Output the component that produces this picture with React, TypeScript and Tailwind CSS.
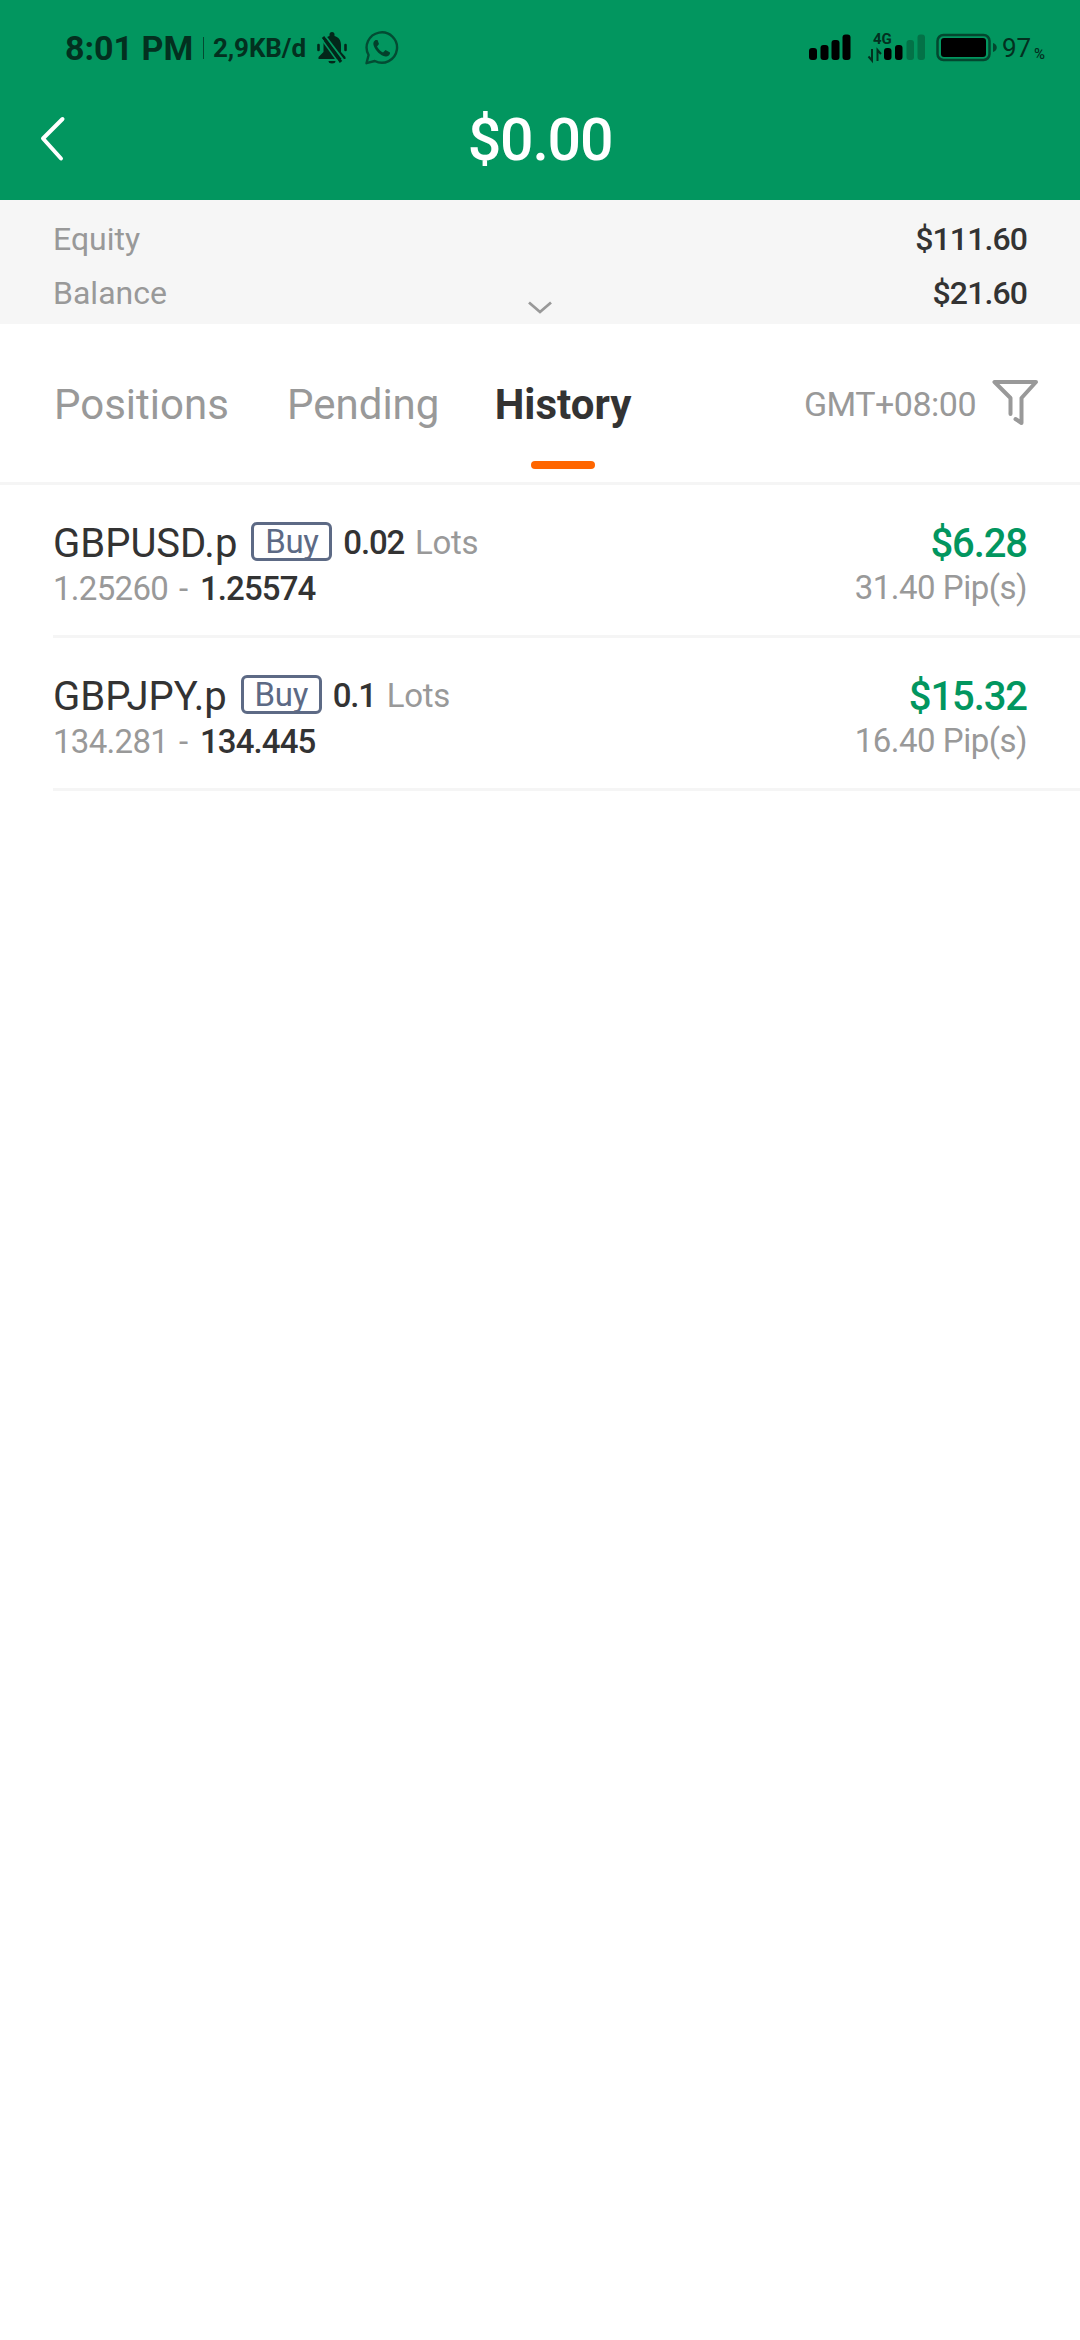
import { type ReactNode } from 'react'

export default function App() {
  return (
    <div className="flex min-h-[2340px] w-[1080px] flex-col bg-white font-[Roboto,sans-serif] text-[#333333]">
      <header className="h-[200px] bg-[#02965f]">
        <StatusBar />
        <div className="grid h-[88px] grid-cols-[100px_1fr_100px] items-center">
          <button aria-label="Back" className="pl-[38px]">
            <svg width="30" height="50" viewBox="0 0 30 50" fill="none">
              <path d="M24.500 4L5 23.500L23 43.500" stroke="white" strokeWidth="4" strokeLinecap="round" strokeLinejoin="round" />
            </svg>
          </button>
          <h1 className="text-center text-[59px] leading-[68px] font-medium tracking-[-1.2px] text-white">$0.00</h1>
        </div>
      </header>

      <Summary />
      <Tabs />

      <main>
        {trades.map((trade) => (
          <TradeRow key={trade.symbol} {...trade} />
        ))}
      </main>
    </div>
  )
}

function StatusBar() {
  return (
    <div className="flex h-24 items-center justify-between pr-[34px] pl-[65px] text-[#03301f]">
      <div className="flex items-center">
        <span className="w-[138px] text-[34px] leading-10 font-bold whitespace-nowrap">8:01 PM</span>
        <span className="h-[22px] w-px bg-[#034a31]" />
        <span className="ml-[9px] w-[103px] text-[26px] leading-8 font-bold tracking-[-0.1px] whitespace-nowrap">2,9KB/d</span>
        <svg className="mr-4" width="32" height="34" viewBox="0 0 32 34" fill="none">
          <path d="M16 1a2.500 2.500 0 0 0-2.500 2.500V5C9.500 6 7.500 9 7.500 14v7L2.500 26v2H29.500v-2L25 21v-7c0-5-2.500-8-6.500-9V3.500A2.500 2.500 0 0 0 16 1Z" fill="#03271a" />
          <path d="M12.500 30h7a3.500 2.500 0 0 1-7 0Z" fill="#03271a" />
          <path d="M7 2L29 31" stroke="#02965f" strokeWidth="2" />
          <path d="M7 6L25 31" stroke="#03271a" strokeWidth="3" />
          <path d="M4 6L22 31" stroke="#02965f" strokeWidth="1.500" />
          <path d="M2.500 14v5M29.500 14v5" stroke="#03271a" strokeWidth="2.600" strokeLinecap="round" />
        </svg>
        <svg width="36" height="36" viewBox="0 0 36 36" fill="none">
          <path d="M2.500 33.200L4.600 25A15.200 15.200 0 1 1 10.800 31L2.500 33.200Z" stroke="#034c33" strokeWidth="2.400" strokeLinejoin="round" />
          <path d="M11.500 10C9.800 11 9 12.800 9.500 15C11.500 21 16.500 25.500 21.500 26.500C24 26.500 26.200 25 26 22.500L21.500 20L19 22.500C16.500 21.500 14.300 19 13 16.500L15 14L13.500 10Z" fill="#03402b" />
        </svg>
      </div>
      <div className="flex items-center">
        <SignalIcons />
        <span className="ml-[3px] w-8 text-[26px] leading-8">97</span>
        <span className="mt-[11px] w-3 text-[15px] leading-4 font-medium">%</span>
      </div>
    </div>
  )
}

function SignalIcons() {
  return (
    <svg width="190" height="34" viewBox="0 0 190 34" fill="black">
      <rect x="0" y="17" width="8" height="12" rx="3" />
      <rect x="11.500" y="14" width="8" height="15" rx="3" />
      <rect x="22.500" y="9" width="8" height="20" rx="3" />
      <rect x="33.500" y="3.500" width="8" height="25.500" rx="3" />
      <text x="64" y="12.500" fontSize="15" fontWeight="700" fill="#03301f">4G</text>
      <path d="M63 18v11.500l-3.500-4M68.500 30V19l3.500 4" fill="none" stroke="#03301f" strokeWidth="2" />
      <rect x="75" y="17" width="7.500" height="12" rx="3" />
      <rect x="86" y="14" width="7.500" height="15" rx="3" />
      <rect x="97.500" y="9" width="7.500" height="20" rx="3" fill="#037247" />
      <rect x="108.500" y="3.500" width="7.500" height="25.500" rx="3" fill="#037247" />
      <rect x="128.500" y="4" width="52" height="25" rx="6" fill="none" stroke="#03472f" strokeWidth="2.500" />
      <rect x="132" y="7" width="45" height="19" rx="3" />
      <path d="M184 12c5 1 5 8 0 9Z" fill="#03472f" />
    </svg>
  )
}

function Summary() {
  return (
    <section className="relative flex h-[124px] flex-col bg-[#f6f6f6] px-[53px] pt-3 text-[32px] leading-[54px]">
      <div className="flex justify-between">
        <span className="text-[#999999]">Equity</span>
        <Amount>$111.60</Amount>
      </div>
      <div className="flex justify-between">
        <span className="text-[#999999]">Balance</span>
        <Amount>$21.60</Amount>
      </div>
      <svg className="absolute bottom-[9px] left-[526px]" width="28" height="15" viewBox="0 0 28 15" fill="none">
        <path d="M3 2.500L14 12L25 2.500" stroke="#999999" strokeWidth="2.800" />
      </svg>
    </section>
  )
}

function Amount({ children }: { children: ReactNode }) {
  return <span className="font-medium tracking-[-0.9px]">{children}</span>
}

function Tabs() {
  return (
    <nav className="flex h-[161px] items-start border-b-3 border-[#f5f5f5] pt-[53px] pl-[54px] text-[42px] leading-[56px] text-[#999999]">
      <span className="w-[233px]">Positions</span>
      <span className="w-[207px]">Pending</span>
      <span className="flex w-[138px] flex-col items-center font-bold text-[#333333]">
        History
        <span className="mt-[28px] h-2 w-16 rounded-full bg-[#ff6600]" />
      </span>
      <span className="ml-auto pr-[14px] text-[34px] leading-[54px] tracking-[-0.5px]">GMT+08:00</span>
      <svg className="mr-[40px]" width="50" height="54" viewBox="0 0 50 54" fill="none">
        <path d="M20.500 37V21L4.500 5H46L31.500 21V46L25.500 42" stroke="#999999" strokeWidth="4" strokeLinecap="round" strokeLinejoin="round" />
      </svg>
    </nav>
  )
}

type Trade = {
  symbol: string
  lots: string
  open: string
  close: string
  profit: string
  pips: string
}

function TradeRow({ symbol, lots, open, close, profit, pips }: Trade) {
  return (
    <div className="ml-[53px] flex h-[153px] justify-between border-b-3 border-[#f5f5f5] pt-[37px] pr-[53px]">
      <div>
        <div className="flex h-[42px] items-center">
          <span className="pt-0.5 text-[40px]">{symbol}</span>
          <span className="mb-[3px] ml-[14px] flex h-[39px] w-[81px] items-center justify-center rounded-md border-3 border-[#5d6a85] text-[33px] leading-none tracking-[-0.3px] text-[#5d6a85]">
            Buy
          </span>
          <span className="ml-[11px] text-[33px] font-medium tracking-[-1.2px]">{lots}</span>
          <span className="ml-[11px] text-[33px] tracking-[-0.3px] text-[#999999]">Lots</span>
        </div>
        <div className="flex text-[33px] leading-[50px] text-[#999999]">
          <span className="w-[126px] tracking-[-0.7px]">{open}</span>
          <span className="w-[21px]">-</span>
          <span className="font-medium tracking-[-0.9px] text-[#333333]">{close}</span>
        </div>
      </div>
      <div className="text-right">
        <div className="text-[40px] leading-[43px] font-medium tracking-[-1.1px] text-[#02965f]">{profit}</div>
        <div className="text-[33px] leading-[46px] tracking-[-0.5px] text-[#999999]">{pips} Pip(s)</div>
      </div>
    </div>
  )
}

const trades: Trade[] = [
  {
    symbol: 'GBPUSD.p',
    lots: '0.02',
    open: '1.25260',
    close: '1.25574',
    profit: '$6.28',
    pips: '31.40',
  },
  {
    symbol: 'GBPJPY.p',
    lots: '0.1',
    open: '134.281',
    close: '134.445',
    profit: '$15.32',
    pips: '16.40',
  },
]
